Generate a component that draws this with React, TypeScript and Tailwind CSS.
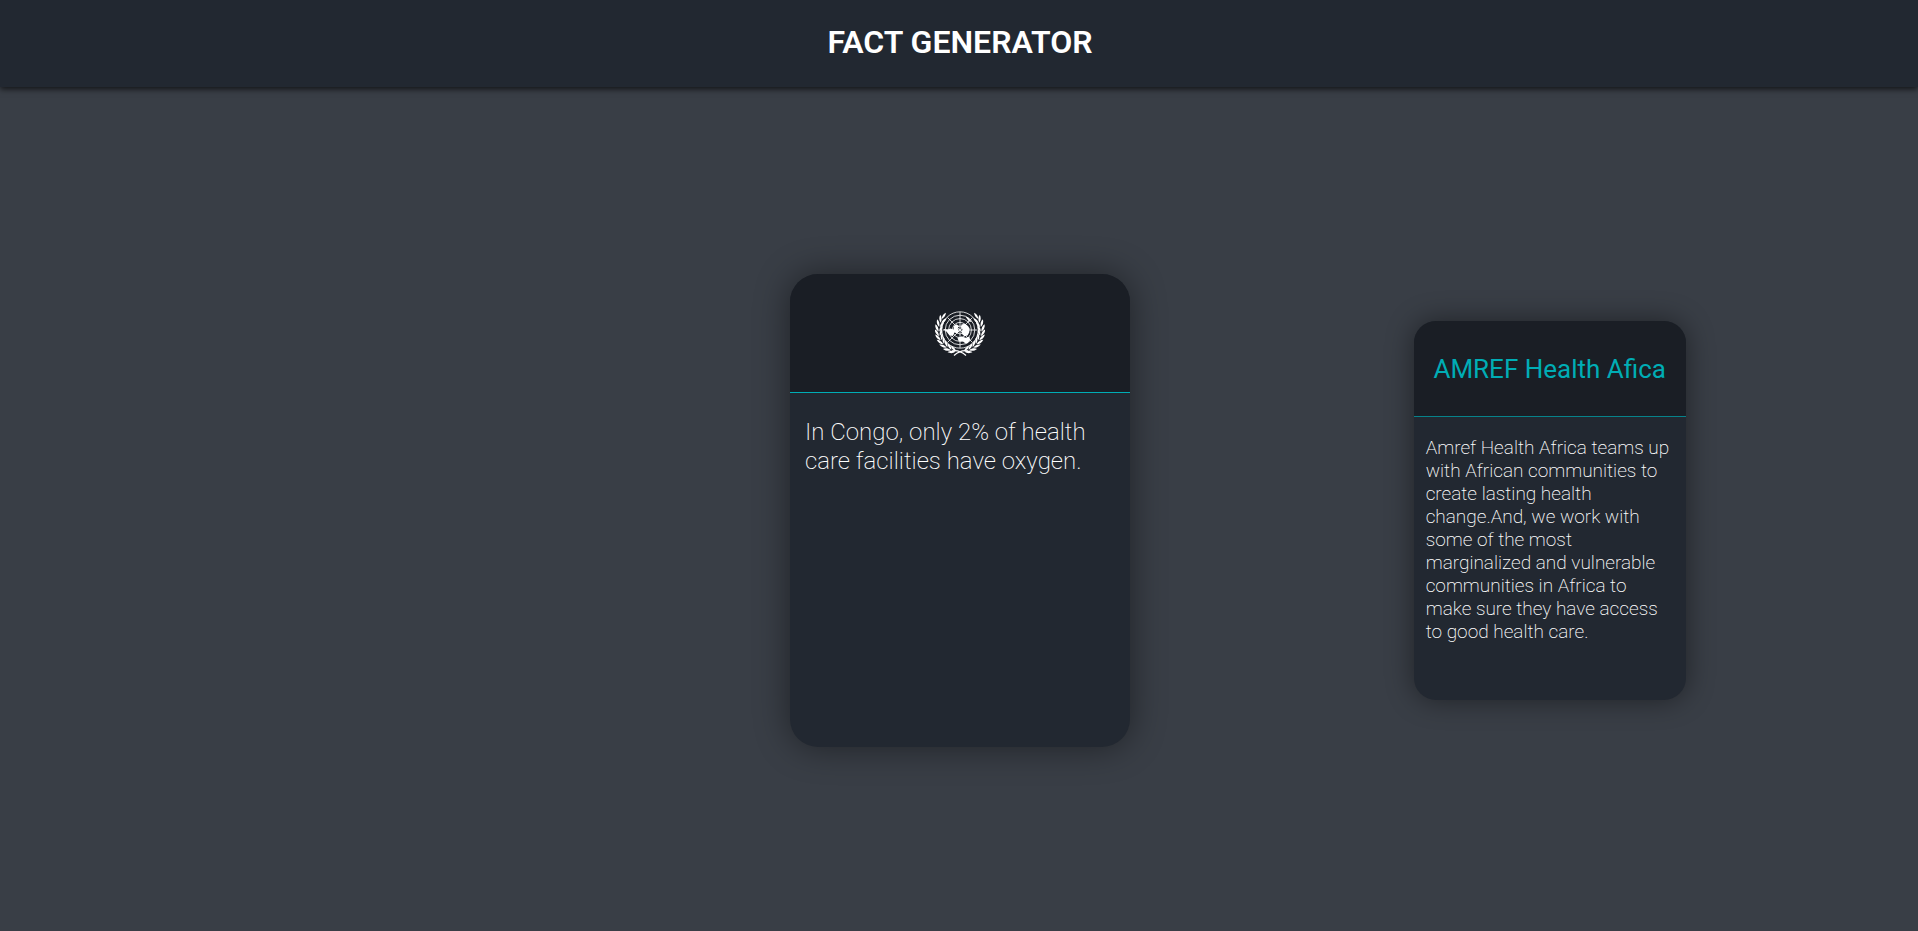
import React from "react";

const BRANCH = [
  { x: 7.4, y: 8.4, a: 24 },
  { x: 5.2, y: 12.4, a: 12 },
  { x: 4, y: 16.8, a: 3 },
  { x: 3.9, y: 21.2, a: -6 },
  { x: 4.8, y: 25.6, a: -17 },
  { x: 6.7, y: 29.8, a: -29 },
  { x: 9.4, y: 33.6, a: -41 },
  { x: 13, y: 36.8, a: -54 },
  { x: 17.2, y: 39, a: -68 },
];

function Branch() {
  return (
    <g>
      {BRANCH.map((leaf) => (
        <g key={leaf.y} transform={`translate(${leaf.x} ${leaf.y}) rotate(${leaf.a})`}>
          <path d="M-0.2 3.8C-2.9 2.2-4-0.4-3.9-3.4C-1.4-2-0.2 0.4-0.2 3.8Z" />
          <path d="M0.5 3.8C0.2 0.8 1.2-1.4 3.3-2.8C3.8-0.2 2.9 2.2 0.5 3.8Z" />
        </g>
      ))}
      <path d="M11 1.8C8.2 3 6.8 5 6.8 8C9.2 6.6 10.6 4.6 11 1.8Z" />
      <path
        d="M17 40C21 39 25 39.4 31 44.4"
        fill="none"
        stroke="currentColor"
        strokeWidth="1.3"
      />
    </g>
  );
}

function UnitedNationsLogo() {
  return (
    <svg
      viewBox="0 0 50 45"
      className="h-[45px] w-[50px] text-white"
      fill="currentColor"
      role="img"
      aria-label="United Nations"
    >
      <g fill="none" stroke="currentColor" strokeWidth="0.8">
        <circle cx="25" cy="19" r="18.2" />
        <circle cx="25" cy="19" r="14.8" />
        <circle cx="25" cy="19" r="11.4" />
        <circle cx="25" cy="19" r="7.6" />
        <circle cx="25" cy="19" r="4" />
        <path d="M25 1V37M8 19H42M12.6 6.6L37.4 31.4M37.4 6.6L12.6 31.4" />
      </g>
      <path d="M8.4 18L13 18.6L15.6 17.4L18.6 18.8L19 15L21.4 13.2L23.8 14.8L22.8 17.4L24 20.4L22.2 22.6L19.4 21.6L17.8 25L14.4 24.2L11.6 20.8Z" />
      <path d="M26.4 13.6L30 12.8L33 15L34.6 17.4L34.2 21.4L32.6 24.6L29.6 25.2L27.4 23.4L26.4 20.8L27.8 18.6L26 16.4Z" />
      <path d="M22.4 26.8L26.6 25.6L30.8 26.8L34.4 25.8L35.2 29L32.6 32.2L30.6 32.4L28 30.4L23.6 30Z" />
      <path d="M30.4 5.4L33.4 6.4L36.8 11L34 10.4Z" />
      <Branch />
      <g transform="translate(50 0) scale(-1 1)">
        <Branch />
      </g>
    </svg>
  );
}

export default function App() {
  return (
    <div className="flex min-h-screen flex-col overflow-x-hidden bg-[#393e46] font-['Roboto',sans-serif]">
      <header className="z-10 flex h-[87px] items-center justify-center bg-[#222831] pb-1 pl-0.5 shadow-[0_2px_6px_rgba(0,0,0,0.7)]">
        <h1 className="text-[32px] leading-10 font-semibold text-white">FACT GENERATOR</h1>
      </header>

      <main className="grid grow grid-cols-[1fr_340px_1fr] items-center pt-[3px] pl-0.5">
        <article className="col-start-2 h-[473px] overflow-hidden rounded-[28px] bg-[#222831] shadow-[0_0_35px_rgba(0,0,0,0.45)]">
          <div className="flex h-[119px] items-center justify-center border-b border-[#00adb5] bg-[#1a1e25]">
            <UnitedNationsLogo />
          </div>
          <p className="px-[15px] pt-[25px] text-2xl leading-[29px] font-extralight text-white">
            In Congo, only 2% of health care facilities have oxygen.
          </p>
        </article>

        <aside className="pl-[36%]">
          <article className="h-[379px] w-[272px] overflow-hidden rounded-[22px] bg-[#222831] shadow-[0_0_28px_rgba(0,0,0,0.45)]">
            <div className="flex h-24 items-center justify-center border-b border-[#00adb5]/70 bg-[#1a1e25]">
              <h2 className="text-[26px] leading-8 text-[#00adb5]">AMREF Health Afica</h2>
            </div>
            <p className="px-3 pt-[19px] text-[19px] leading-[23px] font-extralight text-white">
              Amref Health Africa teams up with African communities to create lasting health
              change.And, we work with some of the most marginalized and vulnerable communities in
              Africa to make sure they have access to good health care.
            </p>
          </article>
        </aside>
      </main>
    </div>
  );
}
